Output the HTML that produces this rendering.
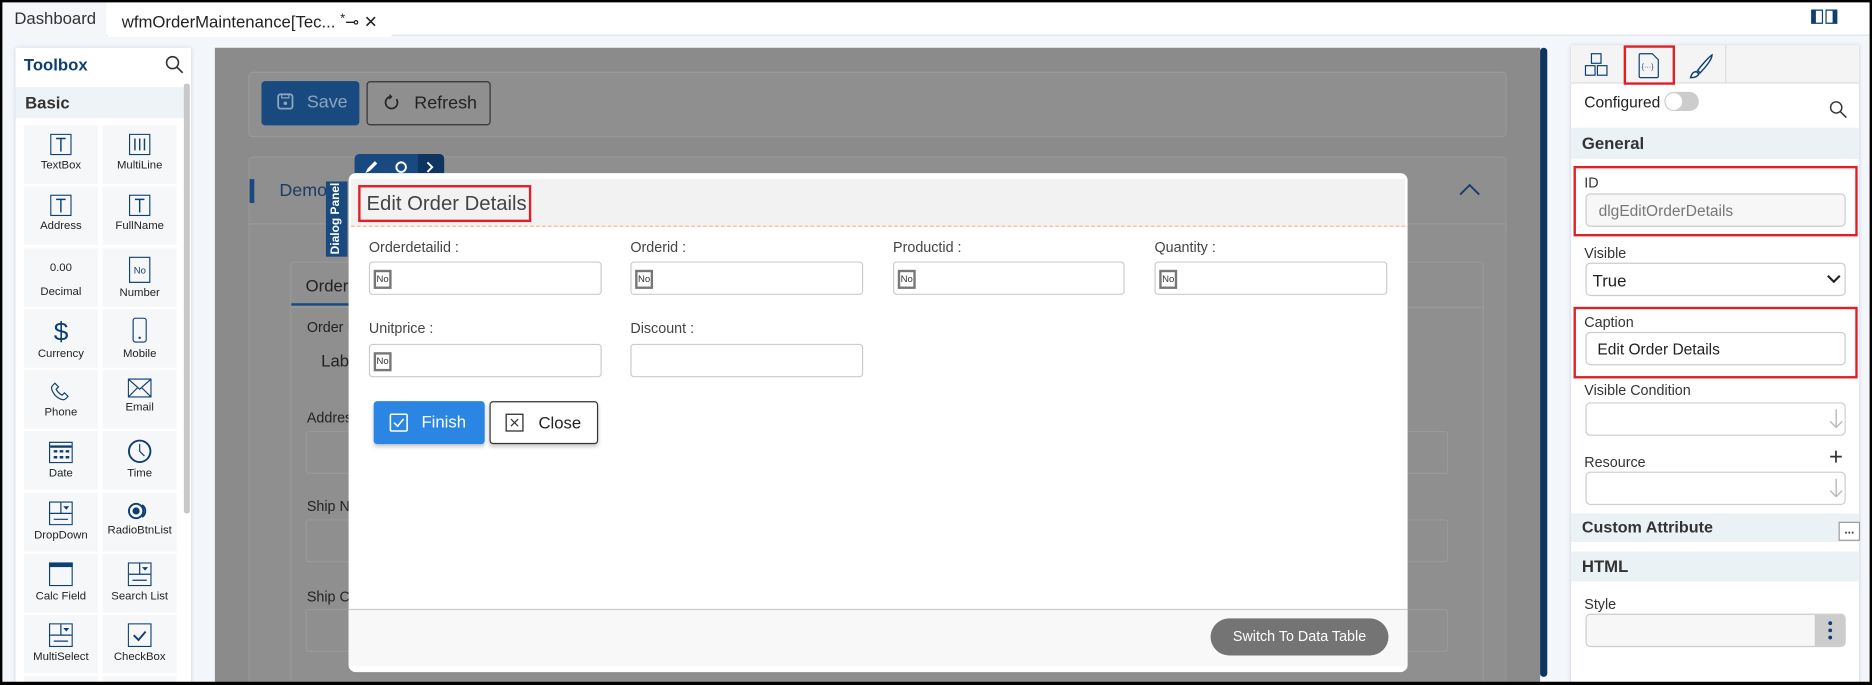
<!DOCTYPE html>
<html><head><meta charset="utf-8">
<style>
*{box-sizing:border-box;margin:0;padding:0}
html,body{width:1872px;height:685px;overflow:hidden;background:#000;font-family:"Liberation Sans",Arial,sans-serif}
#w{position:absolute;left:0;top:0;width:1568px;height:574px;transform:scale(1.193878);transform-origin:0 0;background:#f3f6fa;overflow:hidden}
#bd{position:absolute;left:0;top:0;width:1568px;height:574px;border:2px solid #000;border-bottom:3px solid #000;pointer-events:none}
.a{position:absolute}
.it{position:absolute;width:62px;height:49px;background:#f6f7f8;text-align:center;font-size:9.5px;color:#222}
.it svg{display:block;margin:7px auto 3px}
.lbl{position:absolute;font-size:12px;color:#444}
.inp{position:absolute;height:28px;border:1px solid #ccc;border-radius:3px;background:#fff}
.no{position:absolute;left:3px;top:6px;width:15px;height:16px;border:2px solid #777;font-size:8px;color:#333;line-height:12px;text-align:center}
.pl{position:absolute;font-size:12px;color:#333}
.pin{position:absolute;left:1328px;width:218px;height:28px;border:1px solid #ccc;border-radius:4px;background:#fff}
.red{position:absolute;border:2px solid #e01f26}
.sec{position:absolute;left:1316px;width:241px;background:#ebf2f6;font-size:14px;font-weight:bold;color:#333;padding-left:9px}
</style></head><body><div id="w">
<!-- tabs -->
<div class="a" style="left:0;top:0;width:1568px;height:30px;background:#fff;border-bottom:1px solid #dde3ea"></div>
<div class="a" style="left:0;top:0;width:89px;height:30px;background:#f4f6f9;font-size:14px;color:#333;padding:7px 0 0 12px">Dashboard</div>
<div class="a" style="left:90px;top:4px;width:238px;height:27px;background:#fff;font-size:14px;color:#222;padding:6px 0 0 12px">wfmOrderMaintenance[Tec... <span style="font-size:11px;vertical-align:top">*</span>⊸ ✕</div>
<div class="a" style="left:1517px;top:8px;width:10px;height:12px;border:1.5px solid #0d3f73;border-left-width:4px"></div>
<div class="a" style="left:1529px;top:8px;width:10px;height:12px;border:1.5px solid #0d3f73;border-right-width:4px"></div>
<!-- toolbox -->
<div class="a" style="left:13px;top:40px;width:147px;height:534px;background:#fff;box-shadow:0 0 3px #ccd"></div>
<div class="a" style="left:20px;top:46px;font-size:14px;font-weight:bold;color:#0d3f73">Toolbox</div>
<svg class="a" style="left:138px;top:46px" width="16" height="16"><circle cx="6.5" cy="6.5" r="5" fill="none" stroke="#333" stroke-width="1.3"/><path d="M10 10l5 5" stroke="#333" stroke-width="1.4"/></svg>
<div class="a" style="left:13px;top:73px;width:141px;height:26px;background:#eef3f7;font-size:14px;font-weight:bold;color:#333;padding:5px 0 0 8px">Basic</div>
<div class="a" style="left:154px;top:70px;width:5px;height:360px;background:#c8c8c8;border-radius:2px"></div>
<div class="it" style="left:20px;top:105px"><svg width="18" height="18"><rect x=".5" y=".5" width="17" height="17" fill="none" stroke="#0d3f73"/><path d="M5 4h8M9 4v11" stroke="#0d3f73" stroke-width="1.2"/></svg>TextBox</div>
<div class="it" style="left:86px;top:105px"><svg width="18" height="18"><rect x=".5" y=".5" width="17" height="17" fill="none" stroke="#0d3f73"/><path d="M5 4v10M9 4v10M13 4v10" stroke="#0d3f73" stroke-width="1.2"/></svg>MultiLine</div>
<div class="it" style="left:20px;top:156px"><svg width="18" height="18"><rect x=".5" y=".5" width="17" height="17" fill="none" stroke="#0d3f73"/><path d="M5 4h8M9 4v11" stroke="#0d3f73" stroke-width="1.2"/></svg>Address</div>
<div class="it" style="left:86px;top:156px"><svg width="18" height="18"><rect x=".5" y=".5" width="17" height="17" fill="none" stroke="#0d3f73"/><path d="M5 4h8M9 4v11" stroke="#0d3f73" stroke-width="1.2"/></svg>FullName</div>
<div class="it" style="left:20px;top:208px;padding-top:11px">0.00<br><span style="display:block;margin-top:9px">Decimal</span></div>
<div class="it" style="left:86px;top:208px"><svg width="18" height="22"><rect x=".5" y=".5" width="17" height="21" fill="none" stroke="#0d3f73"/><text x="4" y="14" font-size="8" fill="#0d3f73" font-family="Liberation Sans">No</text></svg>Number</div>
<div class="it" style="left:20px;top:259px"><svg width="14" height="22"><text x="1" y="19" font-size="22" fill="#0d3f73" font-family="Liberation Sans">$</text></svg>Currency</div>
<div class="it" style="left:86px;top:259px"><svg width="12" height="22"><rect x=".5" y=".5" width="11" height="20" rx="2" fill="none" stroke="#0d3f73"/><circle cx="6" cy="17" r="1" fill="#0d3f73"/></svg>Mobile</div>
<div class="it" style="left:20px;top:310px"><svg width="20" height="20"><path d="M5 14c3 3 7 5 9 3l2-2-3-3-2 2c-2-1-4-3-5-5l2-2-3-3-2 2c-2 2 0 5 2 8z" fill="none" stroke="#0d3f73"/></svg>Phone</div>
<div class="it" style="left:86px;top:310px"><svg width="20" height="16"><rect x=".5" y=".5" width="19" height="15" fill="none" stroke="#0d3f73"/><path d="M1 1l9 8 9-8M1 15l7-7M19 15l-7-7" fill="none" stroke="#0d3f73"/></svg>Email</div>
<div class="it" style="left:20px;top:361px"><svg width="20" height="20"><rect x=".5" y="2.5" width="19" height="17" fill="none" stroke="#0d3f73"/><path d="M1 6h18" stroke="#0d3f73" stroke-width="2"/><path d="M4 10h3M9 10h3M14 10h3M4 15h3M9 15h3M14 15h3" stroke="#0d3f73" stroke-width="2"/></svg>Date</div>
<div class="it" style="left:86px;top:361px"><svg width="20" height="20"><circle cx="10" cy="10" r="9" fill="none" stroke="#0d3f73" stroke-width="1.6"/><path d="M10 4v6l4 4" fill="none" stroke="#0d3f73"/></svg>Time</div>
<div class="it" style="left:20px;top:413px"><svg width="20" height="20"><rect x=".5" y=".5" width="19" height="19" fill="none" stroke="#0d3f73"/><path d="M1 10h18M10 1v9M4 15h12" stroke="#0d3f73"/><path d="M12 4h5l-2.5 3z" fill="#0d3f73"/></svg>DropDown</div>
<div class="it" style="left:86px;top:413px"><svg width="22" height="16"><circle cx="8" cy="8" r="6" fill="none" stroke="#0d3f73" stroke-width="1.6"/><circle cx="8" cy="8" r="3" fill="#0d3f73"/><path d="M13 3a6 6 0 0 1 0 10" fill="none" stroke="#0d3f73" stroke-width="1.6"/></svg>RadioBtnList</div>
<div class="it" style="left:20px;top:464px"><svg width="20" height="20"><rect x=".5" y=".5" width="19" height="19" fill="none" stroke="#0d3f73"/><rect x="0" y="0" width="20" height="4" fill="#0d3f73"/></svg>Calc Field</div>
<div class="it" style="left:86px;top:464px"><svg width="20" height="20"><rect x=".5" y=".5" width="19" height="19" fill="none" stroke="#0d3f73"/><path d="M1 10h18M10 1v9M4 15h12" stroke="#0d3f73"/><path d="M12 4h5l-2.5 3z" fill="#0d3f73"/></svg>Search List</div>
<div class="it" style="left:20px;top:515px"><svg width="20" height="20"><rect x=".5" y=".5" width="19" height="19" fill="none" stroke="#0d3f73"/><path d="M1 10h18M10 1v9M4 15h12" stroke="#0d3f73"/><path d="M12 4h5l-2.5 3z" fill="#0d3f73"/></svg>MultiSelect</div>
<div class="it" style="left:86px;top:515px"><svg width="20" height="20"><rect x=".5" y=".5" width="19" height="19" fill="none" stroke="#0d3f73"/><path d="M5 10l4 4 6-7" fill="none" stroke="#0d3f73" stroke-width="1.6"/></svg>CheckBox</div>
<div class="it" style="left:20px;top:566px;height:8px"></div><div class="it" style="left:86px;top:566px;height:8px"></div>
<!-- canvas (dimmed) -->
<div class="a" style="left:180px;top:40px;width:1110px;height:534px;background:#8b8b8b"></div>
<div class="a" style="left:1290px;top:40px;width:6px;height:527px;background:#0d3560;border-radius:3px"></div>
<div class="a" style="left:208px;top:60px;width:1054px;height:55px;background:#8f8f8f;border:1px solid #999;border-radius:4px"></div>
<div class="a" style="left:219px;top:68px;width:82px;height:37px;background:#184a80;border-radius:3px;color:#8fa5bd;font-size:15px;padding:9px 0 0 38px">Save</div>
<svg class="a" style="left:232px;top:78px" width="14" height="14"><rect x="1" y="1" width="12" height="12" rx="2" fill="none" stroke="#8fa5bd" stroke-width="1.5"/><circle cx="7" cy="8.5" r="1.5" fill="#8fa5bd"/><path d="M4 1v3h6V1" fill="none" stroke="#8fa5bd"/></svg>
<div class="a" style="left:307px;top:68px;width:104px;height:37px;border:1px solid #333;border-radius:3px;color:#222;font-size:15px;padding:9px 0 0 39px">Refresh</div>
<svg class="a" style="left:321px;top:79px" width="14" height="14"><path d="M11 4a5 5 0 1 1-5-2" fill="none" stroke="#222" stroke-width="1.4"/><path d="M5 0l2 2-2 2" fill="none" stroke="#222"/></svg>
<div class="a" style="left:208px;top:131px;width:1054px;height:443px;background:#8f8f8f;border:1px solid #999;border-bottom:none;border-radius:4px 4px 0 0"></div>
<div class="a" style="left:209px;top:187px;width:1052px;height:1px;background:#9a9a9a"></div>
<div class="a" style="left:209px;top:150px;width:4px;height:20px;background:#184a80"></div>
<div class="a" style="left:234px;top:151px;font-size:15px;color:#1a3c66">Demo</div>
<svg class="a" style="left:1221px;top:153px" width="20" height="12"><path d="M2 10l8-8 8 8" fill="none" stroke="#1a3c66" stroke-width="1.6"/></svg>
<div class="a" style="left:243px;top:219px;width:1000px;height:355px;border:1px solid #999;border-bottom:none;border-radius:3px 3px 0 0"></div>
<div class="a" style="left:256px;top:231px;font-size:14px;color:#222">Order</div>
<div class="a" style="left:244px;top:254px;width:50px;height:2px;background:#184a80"></div>
<div class="a" style="left:244px;top:257px;width:998px;height:1px;background:#9a9a9a"></div>
<div class="a" style="left:257px;top:267px;font-size:12px;color:#222">Order I</div>
<div class="a" style="left:269px;top:294px;font-size:14px;color:#222">Lab</div>
<div class="a" style="left:257px;top:343px;font-size:12px;color:#222">Address</div>
<div class="a" style="left:256px;top:361px;width:957px;height:36px;border:1px solid #999;border-radius:3px"></div>
<div class="a" style="left:257px;top:417px;font-size:12px;color:#222">Ship N</div>
<div class="a" style="left:256px;top:435px;width:957px;height:36px;border:1px solid #999;border-radius:3px"></div>
<div class="a" style="left:257px;top:493px;font-size:12px;color:#222">Ship C</div>
<div class="a" style="left:256px;top:510px;width:957px;height:36px;border:1px solid #999;border-radius:3px"></div>
<!-- toolbar chip -->
<div class="a" style="left:297px;top:129px;width:75px;height:22px;background:#184a80;border-radius:4px 4px 0 0"></div>
<div class="a" style="left:350px;top:129px;width:22px;height:22px;background:#0d3560;border-radius:0 4px 0 0"></div>
<svg class="a" style="left:304px;top:133px" width="62" height="14"><path d="M2 12l2-4 6-6 2 2-6 6z" fill="#fff"/><circle cx="32" cy="7" r="4" fill="none" stroke="#fff" stroke-width="1.6"/><path d="M54 3l4 4-4 4" fill="none" stroke="#fff" stroke-width="1.6"/></svg>
<div class="a" style="left:273px;top:152px;width:18px;height:63px;background:#184a80"></div>
<div class="a" style="left:274px;top:214px;transform:rotate(-90deg);transform-origin:0 0;width:62px;font-size:10px;font-weight:bold;color:#fff;line-height:16px;text-align:center">Dialog Panel</div>
<!-- dialog -->
<div class="a" style="left:292px;top:145px;width:887px;height:418px;background:#fff;border-radius:6px"></div>
<div class="a" style="left:294px;top:150px;width:883px;height:40px;background:#f2f2f2;border-bottom:1px dashed #f5c080"></div>
<div class="red" style="left:300px;top:155px;width:145px;height:31px"></div>
<div class="a" style="left:307px;top:161px;font-size:17px;color:#444">Edit Order Details</div>
<div class="lbl" style="left:309px;top:200px">Orderdetailid :</div>
<div class="lbl" style="left:528px;top:200px">Orderid :</div>
<div class="lbl" style="left:748px;top:200px">Productid :</div>
<div class="lbl" style="left:967px;top:200px">Quantity :</div>
<div class="inp" style="left:309px;top:219px;width:195px"><div class="no">No</div></div>
<div class="inp" style="left:528px;top:219px;width:195px"><div class="no">No</div></div>
<div class="inp" style="left:748px;top:219px;width:194px"><div class="no">No</div></div>
<div class="inp" style="left:967px;top:219px;width:195px"><div class="no">No</div></div>
<div class="lbl" style="left:309px;top:268px">Unitprice :</div>
<div class="lbl" style="left:528px;top:268px">Discount :</div>
<div class="inp" style="left:309px;top:288px;width:195px"><div class="no">No</div></div>
<div class="inp" style="left:528px;top:288px;width:195px"></div>
<div class="a" style="left:313px;top:336px;width:93px;height:36px;background:#2a85e3;border-radius:3px;color:#fff;font-size:14px;padding:9px 0 0 40px;box-shadow:0 2px 3px #ccc">Finish</div>
<svg class="a" style="left:326px;top:346px" width="16" height="16"><rect x="1" y="1" width="14" height="14" rx="1" fill="none" stroke="#fff" stroke-width="1.3"/><path d="M4 8l3 3 5-6" fill="none" stroke="#fff" stroke-width="1.3"/></svg>
<div class="a" style="left:410px;top:336px;width:91px;height:36px;background:#fff;border:1px solid #333;border-radius:3px;color:#222;font-size:14px;padding:9px 0 0 40px;box-shadow:0 2px 3px #ccc">Close</div>
<svg class="a" style="left:423px;top:346px" width="16" height="16"><rect x="1" y="1" width="14" height="14" fill="none" stroke="#333" stroke-width="1.1"/><path d="M5 5l6 6M11 5l-6 6" stroke="#333"/></svg>
<div class="a" style="left:292px;top:510px;width:887px;height:48px;background:#f8f8f8;border-top:1px solid #ccc"></div>
<div class="a" style="left:1014px;top:518px;width:149px;height:31px;background:#747474;border-radius:16px;color:#fff;font-size:12px;text-align:center;line-height:31px">Switch To Data Table</div>
<!-- right panel -->
<div class="a" style="left:1316px;top:38px;width:241px;height:536px;background:#fff;box-shadow:0 0 3px #ccd"></div>
<div class="a" style="left:1316px;top:38px;width:241px;height:32px;background:#f4f4f4;border-bottom:1px solid #ddd"></div>
<div class="a" style="left:1445px;top:38px;width:1px;height:32px;background:#ddd"></div>
<svg class="a" style="left:1327px;top:44px" width="22" height="22"><rect x="6" y="1" width="8" height="8" fill="none" stroke="#0d3f73"/><rect x="1" y="11" width="8" height="8" fill="none" stroke="#0d3f73"/><rect x="11" y="11" width="8" height="8" fill="none" stroke="#0d3f73"/></svg>
<div class="red" style="left:1360px;top:38px;width:43px;height:33px"></div>
<svg class="a" style="left:1372px;top:44px" width="18" height="22"><path d="M1 2a1 1 0 0 1 1-1h10l5 5v14a1 1 0 0 1-1 1H2a1 1 0 0 1-1-1z" fill="none" stroke="#0d3f73"/><text x="3" y="14" font-size="6" fill="#0d3f73">{···}</text></svg>
<svg class="a" style="left:1412px;top:44px" width="24" height="24"><path d="M22 2c-3 2-9 9-12 13l2 2c4-4 10-11 10-15zM9 16c-3 0-4 2-5 5 3 0 6-1 7-3z" fill="none" stroke="#0d3f73" stroke-width="1.2"/></svg>
<div class="a" style="left:1327px;top:78px;font-size:13px;color:#222">Configured</div>
<div class="a" style="left:1394px;top:77px;width:29px;height:16px;border-radius:8px;background:#ccc"></div>
<div class="a" style="left:1395px;top:78px;width:14px;height:14px;border-radius:7px;background:#fff"></div>
<svg class="a" style="left:1532px;top:84px" width="16" height="16"><circle cx="6" cy="6" r="4.7" fill="none" stroke="#333" stroke-width="1.2"/><path d="M9.5 9.5l5 5" stroke="#333" stroke-width="1.3"/></svg>
<div class="sec" style="top:107px;height:26px;line-height:26px">General</div>
<div class="red" style="left:1318px;top:139px;width:238px;height:59px"></div>
<div class="pl" style="left:1327px;top:146px">ID</div>
<div class="pin" style="top:162px;background:#f7f7f7;font-size:13px;color:#777;padding:6px 0 0 10px">dlgEditOrderDetails</div>
<div class="pl" style="left:1327px;top:205px">Visible</div>
<div class="pin" style="top:220px;font-size:14px;color:#222;padding:6px 0 0 5px">True</div>
<svg class="a" style="left:1530px;top:230px" width="12" height="8"><path d="M1 1l5 5 5-5" fill="none" stroke="#222" stroke-width="1.8"/></svg>
<div class="red" style="left:1318px;top:257px;width:238px;height:60px"></div>
<div class="pl" style="left:1327px;top:263px">Caption</div>
<div class="pin" style="top:278px;font-size:13px;color:#222;padding:6px 0 0 9px">Edit Order Details</div>
<div class="pl" style="left:1327px;top:320px">Visible Condition</div>
<div class="pin" style="top:337px"></div>
<svg class="a" style="left:1532px;top:342px" width="12" height="18"><path d="M6 1v15M1 11l5 5 5-5" fill="none" stroke="#bbb" stroke-width="1.2"/></svg>
<div class="pl" style="left:1327px;top:380px">Resource</div>
<div class="a" style="left:1532px;top:372px;font-size:20px;color:#333">+</div>
<div class="pin" style="top:395px"></div>
<svg class="a" style="left:1532px;top:400px" width="12" height="18"><path d="M6 1v15M1 11l5 5 5-5" fill="none" stroke="#bbb" stroke-width="1.2"/></svg>
<div class="sec" style="top:430px;height:24px;line-height:24px;font-size:13.5px">Custom Attribute</div>
<div class="a" style="left:1540px;top:437px;width:18px;height:16px;border:1px solid #999;background:#fff;font-size:10px;font-weight:bold;line-height:14px;text-align:center;color:#333">...</div>
<div class="sec" style="top:462px;height:25px;line-height:25px">HTML</div>
<div class="pl" style="left:1327px;top:499px">Style</div>
<div class="pin" style="top:514px;background:#f7f7f7;overflow:hidden"><div style="position:absolute;right:0;top:0;width:25px;height:28px;background:#ccc"></div></div>
<svg class="a" style="left:1530px;top:519px" width="6" height="18"><circle cx="3" cy="3" r="1.6" fill="#0d3f73"/><circle cx="3" cy="9" r="1.6" fill="#0d3f73"/><circle cx="3" cy="15" r="1.6" fill="#0d3f73"/></svg>
<div id="bd"></div>
</div></body></html>
